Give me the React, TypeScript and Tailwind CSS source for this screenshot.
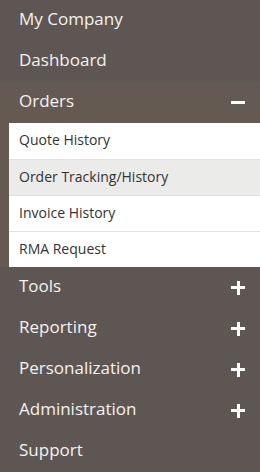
import React from 'react';

const subItems = [
  { label: 'Quote History', active: false },
  { label: 'Order Tracking/History', active: true },
  { label: 'Invoice History', active: false },
  { label: 'RMA Request', active: false },
];

const Plus = () => (
  <span className="relative w-[14px] h-[14px] block">
    <span className="absolute left-0 top-[5.5px] w-[14px] h-[3px] bg-white"></span>
    <span className="absolute top-0 left-[5.5px] w-[3px] h-[14px] bg-white"></span>
  </span>
);

const Minus = () => (
  <span className="relative w-[14px] h-[14px] block">
    <span className="absolute left-0 top-[5.5px] w-[14px] h-[3px] bg-white"></span>
  </span>
);

const Row = ({ label, icon }: { label: string; icon?: React.ReactNode }) => (
  <div className="h-[41px] flex items-center justify-between pl-[19px] pr-[15px] text-[17px] text-[#f4f2f0]">
    <span className="-mt-[3px]">{label}</span>
    {icon}
  </div>
);

export default function App() {
  return (
    <div className="w-[260px] h-[472px] bg-[#5e5653] overflow-hidden" style={{ fontFamily: '"Open Sans", "Noto Sans", sans-serif' }}>
      <Row label="My Company" />
      <Row label="Dashboard" />
      <div className="bg-[#655a52]">
        <Row label="Orders" icon={<Minus />} />
        <div className="ml-[9px] bg-white">
          {subItems.map((item, i) => (
            <div
              key={item.label}
              className={`h-[36px] flex items-center pl-[10px] text-[14px] text-[#333333] ${item.active ? 'bg-[#ebebea]' : ''} ${i > 0 ? 'border-t border-[#e3e3e3]' : ''}`}
            >
              <span className="-mt-[3px]">{item.label}</span>
            </div>
          ))}
        </div>
      </div>
      <Row label="Tools" icon={<Plus />} />
      <Row label="Reporting" icon={<Plus />} />
      <Row label="Personalization" icon={<Plus />} />
      <Row label="Administration" icon={<Plus />} />
      <Row label="Support" />
    </div>
  );
}
